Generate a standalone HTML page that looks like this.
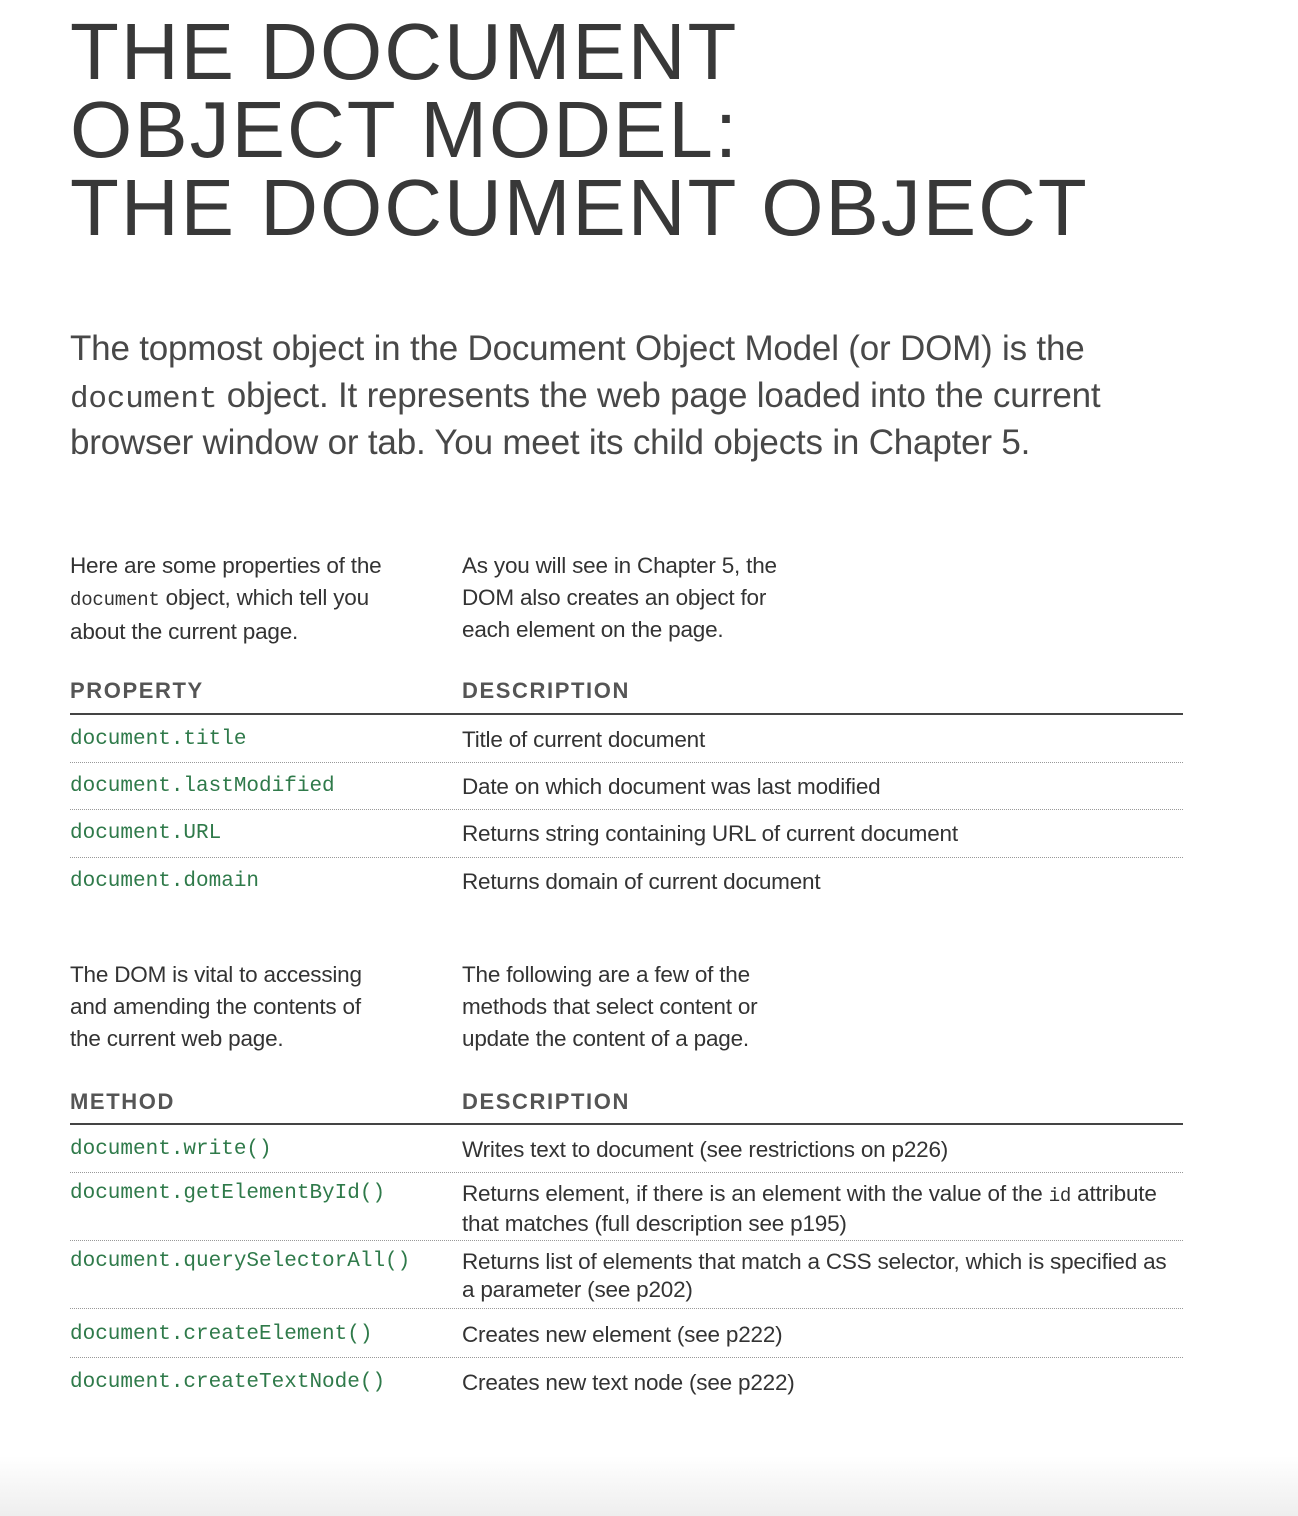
<!DOCTYPE html>
<html><head><meta charset="utf-8"><style>
body{margin:0;width:1298px;height:1516px;background:#fff;position:relative;overflow:hidden;font-family:"Liberation Sans",sans-serif;}
.a{position:absolute;white-space:nowrap}
.t{left:70px;font-size:80px;color:#383838;line-height:80px;letter-spacing:2px}
.i{left:70px;font-size:35px;color:#484848;line-height:47px;letter-spacing:-0.2px}
.s{font-size:22.5px;color:#333;line-height:32px;letter-spacing:-0.2px}
.h{font-size:22px;color:#555;font-weight:bold;letter-spacing:1.6px;line-height:30px}
.c{left:70px;font-family:"Liberation Mono",monospace;font-size:21px;color:#2f7a4a;line-height:30px}
.d{left:462px;font-size:22.5px;color:#333;line-height:28px;letter-spacing:-0.2px}
.rule{position:absolute;left:70px;width:1113px;height:2px;background:#444}
.dot{position:absolute;left:70px;width:1113px;border-top:1px dotted #999}
code{font-family:"Liberation Mono",monospace;font-size:19px}
.fade{position:absolute;left:0;right:0;bottom:0;height:60px;background:linear-gradient(#fff,#eee)}
</style></head><body>
<div class="a t" style="top:12px">THE DOCUMENT</div>
<div class="a t" style="top:90px">OBJECT MODEL:</div>
<div class="a t" style="top:168px">THE DOCUMENT OBJECT</div>

<div class="a i" style="top:325px">The topmost object in the Document Object Model (or DOM) is the</div>
<div class="a i" style="top:372px"><span style="font-family:'Liberation Mono',monospace;font-size:31px">document</span> object. It represents the web page loaded into the current</div>
<div class="a i" style="top:419px">browser window or tab. You meet its child objects in Chapter 5.</div>

<div class="a s" style="left:70px;top:550px">Here are some properties of the<br><code>document</code> object, which tell you<br>about the current page.</div>
<div class="a s" style="left:462px;top:550px">As you will see in Chapter 5, the<br>DOM also creates an object for<br>each element on the page.</div>

<div class="a h" style="left:70px;top:676px">PROPERTY</div>
<div class="a h" style="left:462px;top:676px">DESCRIPTION</div>
<div class="rule" style="top:713px"></div>
<div class="a c" style="top:725px">document.title</div><div class="a d" style="top:726px">Title of current document</div>
<div class="dot" style="top:762px"></div>
<div class="a c" style="top:772px">document.lastModified</div><div class="a d" style="top:773px">Date on which document was last modified</div>
<div class="dot" style="top:809px"></div>
<div class="a c" style="top:819px">document.URL</div><div class="a d" style="top:820px">Returns string containing URL of current document</div>
<div class="dot" style="top:857px"></div>
<div class="a c" style="top:867px">document.domain</div><div class="a d" style="top:868px">Returns domain of current document</div>

<div class="a s" style="left:70px;top:959px">The DOM is vital to accessing<br>and amending the contents of<br>the current web page.</div>
<div class="a s" style="left:462px;top:959px">The following are a few of the<br>methods that select content or<br>update the content of a page.</div>

<div class="a h" style="left:70px;top:1087px">METHOD</div>
<div class="a h" style="left:462px;top:1087px">DESCRIPTION</div>
<div class="rule" style="top:1123px"></div>
<div class="a c" style="top:1135px">document.write()</div><div class="a d" style="top:1136px">Writes text to document (see restrictions on p226)</div>
<div class="dot" style="top:1172px"></div>
<div class="a c" style="top:1179px">document.getElementById()</div><div class="a d" style="top:1180px">Returns element, if there is an element with the value of the <code>id</code> attribute<br>that matches (full description see p195)</div>
<div class="dot" style="top:1240px"></div>
<div class="a c" style="top:1247px">document.querySelectorAll()</div><div class="a d" style="top:1248px">Returns list of elements that match a CSS selector, which is specified as<br>a parameter (see p202)</div>
<div class="dot" style="top:1308px"></div>
<div class="a c" style="top:1320px">document.createElement()</div><div class="a d" style="top:1321px">Creates new element (see p222)</div>
<div class="dot" style="top:1357px"></div>
<div class="a c" style="top:1368px">document.createTextNode()</div><div class="a d" style="top:1369px">Creates new text node (see p222)</div>
<div class="fade"></div>
</body></html>
